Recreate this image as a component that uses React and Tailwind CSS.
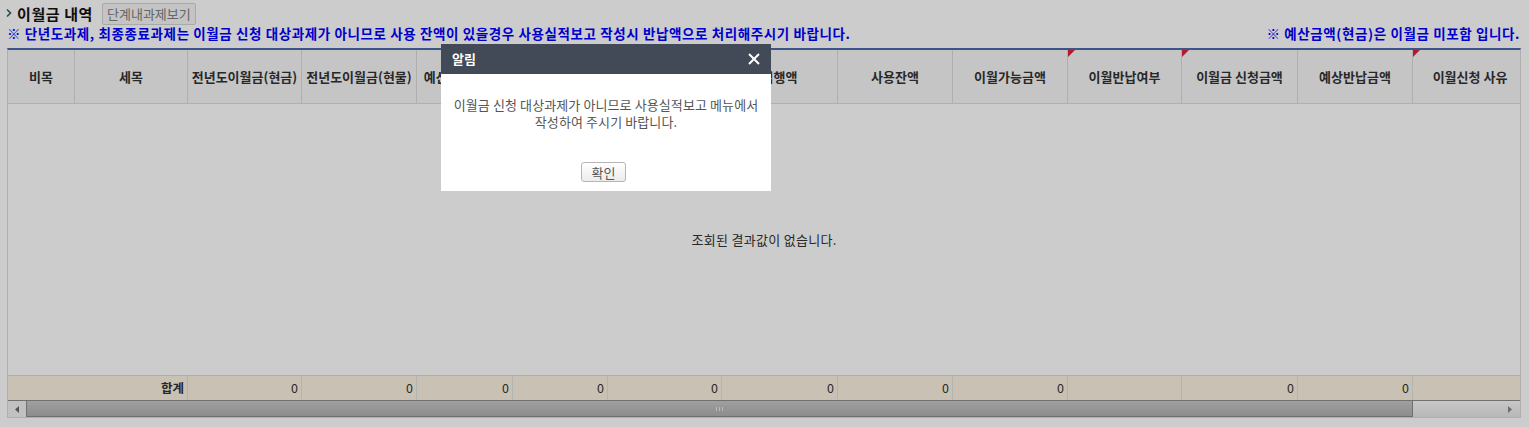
import React from "react";

const columns = [
  { label: "비목", w: 67 },
  { label: "세목", w: 113 },
  { label: "전년도이월금(현금)", w: 114 },
  { label: "전년도이월금(현물)", w: 115 },
  { label: "예산금액(현금)", w: 96 },
  { label: "예산금액(현물)", w: 95 },
  { label: "총예산액", w: 114 },
  { label: "집행액", w: 116 },
  { label: "사용잔액", w: 115 },
  { label: "이월가능금액", w: 115 },
  { label: "이월반납여부", w: 114, mark: true },
  { label: "이월금 신청금액", w: 116, mark: true },
  { label: "예상반납금액", w: 115 },
  { label: "이월신청 사유", w: 115, mark: true },
];

// footer values, index = column index (0,1 merged into 합계)
const totals = [null, null, "0", "0", "0", "0", "0", "0", "0", "0", "", "0", "0", ""];

const RedMark = () => (
  <svg className="absolute left-0 top-0" width="7" height="7" viewBox="0 0 7 7">
    <polygon points="0,0 7,0 0,7" fill="#dc2338" />
  </svg>
);

const App = () => {
  return (
    <div
      className="relative w-[1529px] h-[427px] overflow-hidden bg-white text-[#333]"
      style={{ fontFamily: '"Noto Sans CJK KR", "Noto Sans", sans-serif' }}
    >
      {/* title */}
      <div className="flex items-center h-[26px] pl-[5px] pt-[1px]">
        <svg width="8" height="10" viewBox="0 0 8 10" className="mr-[4px] -mt-[2px]">
          <path d="M2 1.5 L5.5 5 L2 8.5" fill="none" stroke="#355d64" strokeWidth="1.6" />
        </svg>
        <span className="text-[15px] font-bold text-[#111] leading-none tracking-[0.6px]">이월금 내역</span>
        <button className="ml-[9px] h-[22px] px-[4px] border border-[#d4d4d4] bg-[#f5f5f5] rounded-[2px] text-[13px] text-[#808080] leading-none">
          단계내과제보기
        </button>
      </div>

      {/* notice */}
      <div className="flex justify-between items-center h-[16px] pl-[7px] pr-[9px] text-[13.5px] font-bold text-[#0000ff] tracking-[0.6px] leading-none">
        <span>※ 단년도과제, 최종종료과제는 이월금 신청 대상과제가 아니므로 사용 잔액이 있을경우 사용실적보고 작성시 반납액으로 처리해주시기 바랍니다.</span>
        <span>※ 예산금액(현금)은 이월금 미포함 입니다.</span>
      </div>

      {/* grid */}
      <div className="ml-[7px] mt-[6px] w-[1514px] border-t-2 border-[#4b69aa] border-x border-b border-x-[#dbdbdb] border-b-[#dbdbdb] overflow-hidden">
        {/* header */}
        <div className="flex h-[54px] bg-[#f7f7f7] border-b border-[#dcdcdc]">
          {columns.map((c, i) => (
            <div
              key={i}
              className="relative shrink-0 flex items-center justify-center border-r border-[#dbdbdb] text-[13px] font-bold text-[#333] whitespace-nowrap overflow-hidden"
              style={{ width: c.w }}
            >
              {c.mark && <RedMark />}
              {c.label}
            </div>
          ))}
        </div>

        {/* body */}
        <div className="flex items-center justify-center h-[271px] text-[13px] text-[#333] tracking-[0.3px]">
          조회된 결과값이 없습니다.
        </div>

        {/* footer */}
        <div className="flex h-[25px] bg-[#fbf2e2] border-t border-[#fad496] text-[12.5px] text-[#333]">
          <div className="shrink-0 w-[180px] flex items-center justify-end pr-[3px] border-r border-[#e2e2dc] font-bold">
            합계
          </div>
          {totals.slice(2).map((v, i) => (
            <div
              key={i}
              className="shrink-0 flex items-center justify-end pr-[3px] border-r border-[#e2e2dc]"
              style={{ width: columns[i + 2].w }}
            >
              {v}
            </div>
          ))}
        </div>

        {/* horizontal scrollbar */}
        <div className="flex h-[17px] bg-[#f0f0f0] border-t border-[#8c8c8c]">
          <div className="w-[18px] shrink-0 flex items-center justify-center bg-[#f2f2f2]">
            <svg width="5" height="7" viewBox="0 0 5 7">
              <polygon points="4,0 4,7 0,3.5" fill="#6a6a6a" />
            </svg>
          </div>
          <div className="w-[1387px] shrink-0 flex items-center justify-center border border-t-0 border-[#8c8c8c] bg-gradient-to-b from-[#c8c8c8] to-[#b0b0b0]">
            <div className="flex gap-[2px]">
              <span className="w-px h-[4px] bg-[#e8e8e8]" />
              <span className="w-px h-[4px] bg-[#e8e8e8]" />
              <span className="w-px h-[4px] bg-[#e8e8e8]" />
            </div>
          </div>
          <div className="flex-1 flex items-center justify-end pr-[7px] bg-gradient-to-b from-[#fafafa] to-[#e6e6e6]">
            <svg width="5" height="7" viewBox="0 0 5 7">
              <polygon points="0,0 0,7 4,3.5" fill="#8a8a8a" />
            </svg>
          </div>
        </div>
      </div>

      {/* dim overlay */}
      <div className="absolute inset-0 bg-black/20" />

      {/* alert dialog */}
      <div className="absolute left-[441px] top-[44px] w-[330px] bg-white">
        <div className="flex items-center justify-between h-[30px] px-[11px] bg-[#414a56]">
          <span className="text-[13px] font-bold text-white">알림</span>
          <svg width="12" height="12" viewBox="0 0 12 12">
            <path d="M1 1 L11 11 M11 1 L1 11" stroke="#fff" strokeWidth="2" />
          </svg>
        </div>
        <div className="pt-[22px] px-[6px] text-center text-[13px] leading-[17px] text-[#555] tracking-[0.1px]">
          이월금 신청 대상과제가 아니므로 사용실적보고 메뉴에서
          <br />
          작성하여 주시기 바랍니다.
        </div>
        <div className="flex justify-center pt-[32px] pb-[9px] pr-[5px]">
          <button className="w-[45px] h-[20px] rounded-[3px] border border-[#b5b5b5] bg-gradient-to-b from-white to-[#ececec] text-[13px] text-[#555] leading-none">
            확인
          </button>
        </div>
      </div>
    </div>
  );
};

export default App;
